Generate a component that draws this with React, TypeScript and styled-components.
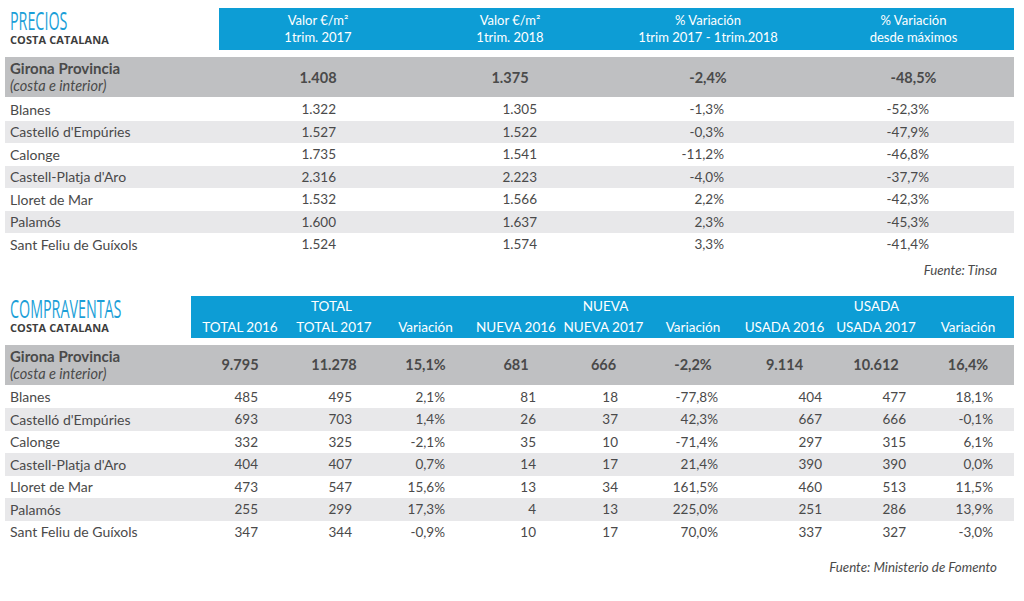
import React from 'react';
import styled, { createGlobalStyle } from 'styled-components';

const GlobalStyle = createGlobalStyle`
  body {
    margin: 0;
    background: #ffffff;
    font-family: Lato, "Open Sans", sans-serif;
    color: #4a4a4a;
  }
`;

interface Col {
  w: number;
  pad: number;
}

const preciosCols: Col[] = [
  { w: 198, pad: 81 },
  { w: 186, pad: 66 },
  { w: 210, pad: 89 },
  { w: 201, pad: 85 },
];

const ventasCols: Col[] = [
  { w: 98, pad: 31 },
  { w: 90, pad: 27 },
  { w: 93, pad: 27 },
  { w: 88, pad: 24 },
  { w: 87, pad: 29 },
  { w: 92, pad: 21 },
  { w: 91, pad: 8 },
  { w: 92, pad: 16 },
  { w: 92, pad: 21 },
];

const template = (label: number, cols: Col[]) =>
  `${label}px ${cols.map(c => `${c.w}px`).join(' ')}`;

const PRECIOS_GRID = template(214, preciosCols);
const VENTAS_GRID = template(186, ventasCols);

const preciosRows: [string, ...string[]][] = [
  ['Blanes', '1.322', '1.305', '-1,3%', '-52,3%'],
  ["Castelló d'Empúries", '1.527', '1.522', '-0,3%', '-47,9%'],
  ['Calonge', '1.735', '1.541', '-11,2%', '-46,8%'],
  ["Castell-Platja d'Aro", '2.316', '2.223', '-4,0%', '-37,7%'],
  ['Lloret de Mar', '1.532', '1.566', '2,2%', '-42,3%'],
  ['Palamós', '1.600', '1.637', '2,3%', '-45,3%'],
  ['Sant Feliu de Guíxols', '1.524', '1.574', '3,3%', '-41,4%'],
];

const ventasRows: [string, ...string[]][] = [
  ['Blanes', '485', '495', '2,1%', '81', '18', '-77,8%', '404', '477', '18,1%'],
  ["Castelló d'Empúries", '693', '703', '1,4%', '26', '37', '42,3%', '667', '666', '-0,1%'],
  ['Calonge', '332', '325', '-2,1%', '35', '10', '-71,4%', '297', '315', '6,1%'],
  ["Castell-Platja d'Aro", '404', '407', '0,7%', '14', '17', '21,4%', '390', '390', '0,0%'],
  ['Lloret de Mar', '473', '547', '15,6%', '13', '34', '161,5%', '460', '513', '11,5%'],
  ['Palamós', '255', '299', '17,3%', '4', '13', '225,0%', '251', '286', '13,9%'],
  ['Sant Feliu de Guíxols', '347', '344', '-0,9%', '10', '17', '70,0%', '337', '327', '-3,0%'],
];

const preciosTotal = ['1.408', '1.375', '-2,4%', '-48,5%'];
const ventasTotal = ['9.795', '11.278', '15,1%', '681', '666', '-2,2%', '9.114', '10.612', '16,4%'];

const ventasHeads = [
  'TOTAL 2016', 'TOTAL 2017', 'Variación',
  'NUEVA 2016', 'NUEVA 2017', 'Variación',
  'USADA 2016', 'USADA 2017', 'Variación',
];

const App: React.FC = () => {
  return (
    <>
      <GlobalStyle />
      <Page>
        <Section>
          <HeaderGrid $cols={PRECIOS_GRID} $rows="42px">
            <TitleBlock $span={1}>
              <Title $w={58}>PRECIOS</Title>
              <Subtitle>COSTA CATALANA</Subtitle>
            </TitleBlock>
            <HeadCell>Valor €/m²<br />1trim. 2017</HeadCell>
            <HeadCell>Valor €/m²<br />1trim. 2018</HeadCell>
            <HeadCell>% Variación<br />1trim 2017 - 1trim.2018</HeadCell>
            <HeadCell>% Variación<br />desde máximos</HeadCell>
          </HeaderGrid>

          <TotalRow $cols={PRECIOS_GRID}>
            <TotalLabel>
              <strong>Girona Provincia</strong>
              <em>(costa e interior)</em>
            </TotalLabel>
            {preciosTotal.map((v, i) => (
              <TotalCell key={i}>{v}</TotalCell>
            ))}
          </TotalRow>

          {preciosRows.map(([name, ...vals], r) => (
            <DataRow key={name} $cols={PRECIOS_GRID} $alt={r % 2 === 1}>
              <Label>{name}</Label>
              {vals.map((v, i) => (
                <Value key={i} $pad={preciosCols[i].pad}>{v}</Value>
              ))}
            </DataRow>
          ))}

          <Source $h={28}>Fuente: Tinsa</Source>
        </Section>

        <Section $top={12}>
          <HeaderGrid $cols={VENTAS_GRID} $rows="20px 22px">
            <TitleBlock $span={2}>
              <Title $w={116}>COMPRAVENTAS</Title>
              <Subtitle>COSTA CATALANA</Subtitle>
            </TitleBlock>
            <GroupCell $from={2}>TOTAL</GroupCell>
            <GroupCell $from={5}>NUEVA</GroupCell>
            <GroupCell $from={8}>USADA</GroupCell>
            {ventasHeads.map((h, i) => (
              <SubHeadCell key={i}>{h}</SubHeadCell>
            ))}
          </HeaderGrid>

          <TotalRow $cols={VENTAS_GRID}>
            <TotalLabel>
              <strong>Girona Provincia</strong>
              <em>(costa e interior)</em>
            </TotalLabel>
            {ventasTotal.map((v, i) => (
              <TotalCell key={i}>{v}</TotalCell>
            ))}
          </TotalRow>

          {ventasRows.map(([name, ...vals], r) => (
            <DataRow key={name} $cols={VENTAS_GRID} $alt={r % 2 === 1}>
              <Label>{name}</Label>
              {vals.map((v, i) => (
                <Value key={i} $pad={ventasCols[i].pad}>{v}</Value>
              ))}
            </DataRow>
          ))}

          <Source $h={48}>Fuente: Ministerio de Fomento</Source>
        </Section>
      </Page>
    </>
  );
};

const Page = styled.div`
  width: 1024px;
  height: 601px;
  padding: 8px 10px 0 5px;
  box-sizing: border-box;
  overflow: hidden;
`;

const Section = styled.section<{ $top?: number }>`
  margin-top: ${p => p.$top || 0}px;
  display: flex;
  flex-direction: column;
`;

const HeaderGrid = styled.div<{ $cols: string; $rows: string }>`
  display: grid;
  grid-template-columns: ${p => p.$cols};
  grid-template-rows: ${p => p.$rows};
  margin-bottom: 7px;
`;

const TitleBlock = styled.div<{ $span: number }>`
  grid-row: 1 / span ${p => p.$span};
  grid-column: 1;
  padding-left: 5px;
  display: flex;
  flex-direction: column;
  justify-content: flex-end;
  padding-bottom: 3px;
`;

const Title = styled.div<{ $w: number }>`
  width: ${p => p.$w}px;
  height: 22px;
  margin-bottom: 2px;
  overflow: visible;
  font-family: "Open Sans", sans-serif;
  font-size: 26px;
  line-height: 22px;
  color: #1b9fd8;
  white-space: nowrap;

  span {
    display: inline-block;
  }
  transform: scaleX(0.55);
  transform-origin: left center;
`;

const Subtitle = styled.div`
  font-family: "Open Sans", sans-serif;
  font-size: 11px;
  font-weight: 700;
  line-height: 14px;
  color: #3d3d3d;
  letter-spacing: 0.1px;
`;

const HeadCell = styled.div`
  background: #0d9dd5;
  color: #ffffff;
  font-size: 13px;
  line-height: 17px;
  text-align: center;
  display: flex;
  align-items: center;
  justify-content: center;
  white-space: nowrap;
`;

const GroupCell = styled.div<{ $from: number }>`
  grid-row: 1;
  grid-column: ${p => p.$from} / span 3;
  background: #0d9dd5;
  color: #ffffff;
  font-size: 13.5px;
  text-align: center;
  padding-top: 2px;
`;

const SubHeadCell = styled.div`
  grid-row: 2;
  background: #0d9dd5;
  color: #ffffff;
  font-size: 13.5px;
  text-align: center;
  white-space: nowrap;
  padding-top: 3px;
`;

const TotalRow = styled.div<{ $cols: string }>`
  display: grid;
  grid-template-columns: ${p => p.$cols};
  height: 40px;
  background: #bfc0c2;
  margin-bottom: 1px;
`;

const TotalLabel = styled.div`
  display: flex;
  flex-direction: column;
  justify-content: center;
  padding-left: 5px;
  line-height: 18px;

  strong {
    font-size: 15px;
    font-weight: 700;
    color: #4a4a4a;
  }

  em {
    font-size: 14.5px;
    color: #4a4a4a;
  }
`;

const TotalCell = styled.div`
  display: flex;
  align-items: center;
  justify-content: center;
  font-size: 14.5px;
  font-weight: 700;
  color: #4a4a4a;
`;

const DataRow = styled.div<{ $cols: string; $alt: boolean }>`
  display: grid;
  grid-template-columns: ${p => p.$cols};
  height: 22.5px;
  background: ${p => (p.$alt ? '#e8e8ea' : 'transparent')};
  align-items: center;
`;

const Label = styled.div`
  padding-left: 5px;
  font-size: 14px;
  color: #4a4a4a;
  white-space: nowrap;
`;

const Value = styled.div<{ $pad: number }>`
  text-align: right;
  padding-right: ${p => p.$pad}px;
  font-size: 13.5px;
  color: #4a4a4a;
  white-space: nowrap;
`;

const Source = styled.div<{ $h: number }>`
  height: ${p => p.$h}px;
  display: flex;
  align-items: center;
  justify-content: flex-end;
  padding-right: 17px;
  font-size: 13.3px;
  font-style: italic;
  color: #4a4a4a;
`;

export default App;
